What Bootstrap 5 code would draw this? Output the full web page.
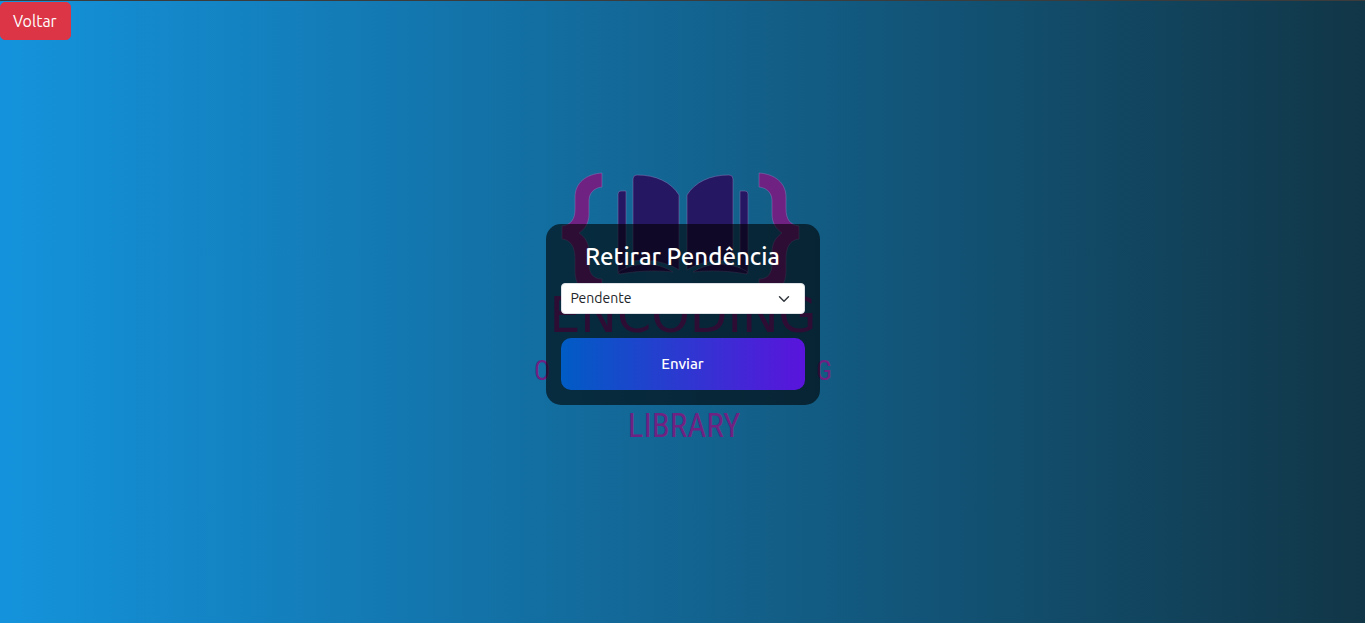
<!DOCTYPE html>
<html lang="pt-BR">
<head>
<meta charset="utf-8">
<meta name="viewport" content="width=device-width, initial-scale=1">
<title>Retirar Pendência</title>
<link href="https://cdn.jsdelivr.net/npm/bootstrap@5.3.0/dist/css/bootstrap.min.css" rel="stylesheet">
<style>
  body {
    font-family: Ubuntu, "Noto Sans", sans-serif;
    background: linear-gradient(to right, rgb(20, 147, 220), rgb(17, 54, 71));
    border-top: 1px solid #3c3c3c;
  }
  .back-link { padding: 6px 13px 6px 12px; border-radius: 5px; margin-top: 1px; }
  .stage { padding-bottom: 34px; }
  .panel { width: 274px; padding: 15px; border-radius: 15px; background: rgba(0, 0, 0, .6); }
  .panel-title { font-size: 24px; line-height: 36px; margin-bottom: 8px; }
  .panel .form-select { font-size: 14px; line-height: 21px; padding-left: 9px; margin-bottom: 24px; }
  .send {
    height: 52px; border-radius: 10px; font-size: 15px;
    background: linear-gradient(to right, rgb(0, 92, 197), rgb(90, 20, 220));
  }
  .brand-mark { top: -59px; }
  .brand-narrow { font-family: "Ubuntu Condensed", "Roboto Condensed", "Open Sans Condensed", "DejaVu Sans Condensed", sans-serif; }
</style>
</head>
<body class="min-vh-100 d-flex flex-column">
  <header class="d-flex">
    <a href="#" class="btn btn-danger back-link">Voltar</a>
  </header>
  <main class="stage flex-grow-1 d-flex justify-content-center align-items-center">
    <div class="position-relative">
      <svg class="brand-mark position-absolute start-50 translate-middle-x" width="300" height="280" viewBox="533 165 300 280" role="img" aria-label="Encoding Library">
        <g stroke="#8a7bb8" stroke-opacity=".6" stroke-width=".8">
          <path id="brace" fill="#702283" d="M602 173V187C593 188 589 194 589 201V214C589 223 585 229 579 233C585 237 589 243 589 252V264C589 273 593 279 602 279V299C584 297 575 286 575 271V259C575 247 571 240 562 239V226C571 225 575 219 575 209V197C575 183 586 174 602 173Z"/>
          <use href="#brace" transform="translate(1361 0) scale(-1 1)"/>
          <g id="half-book" fill="#261763">
            <path d="M618 194Q618 191 621 191H626V269C623 271 618 277 618 272Z"/>
            <path d="M633 179Q633 175 637 175C656 175 671 182 679 195V270C667 262 650 259 633 261Z"/>
            <path d="M618 272C637 261 657 262 673 272C655 270 636 271 620 274Z"/>
          </g>
          <use href="#half-book" transform="translate(1366 0) scale(-1 1)"/>
        </g>
        <g fill="#702283" text-anchor="middle">
          <text x="683" y="332" font-family="DejaVu Sans, sans-serif" font-size="49">ENCODING</text>
          <g class="brand-narrow" font-size="33">
            <text x="542" y="380" font-size="27">O</text>
            <text x="824" y="380" font-size="27">G</text>
            <text x="684" y="437">LIBRARY</text>
          </g>
        </g>
      </svg>
      <form class="panel position-relative">
        <h1 class="panel-title text-white text-center"><label for="situacao">Retirar Pendência</label></h1>
        <select id="situacao" class="form-select form-select-sm">
          <option>Pendente</option>
        </select>
        <button type="submit" class="send btn w-100 border-0 text-white fw-medium">Enviar</button>
      </form>
    </div>
  </main>
<script src="https://cdn.jsdelivr.net/npm/bootstrap@5.3.0/dist/js/bootstrap.bundle.min.js"></script>
</body>
</html>
